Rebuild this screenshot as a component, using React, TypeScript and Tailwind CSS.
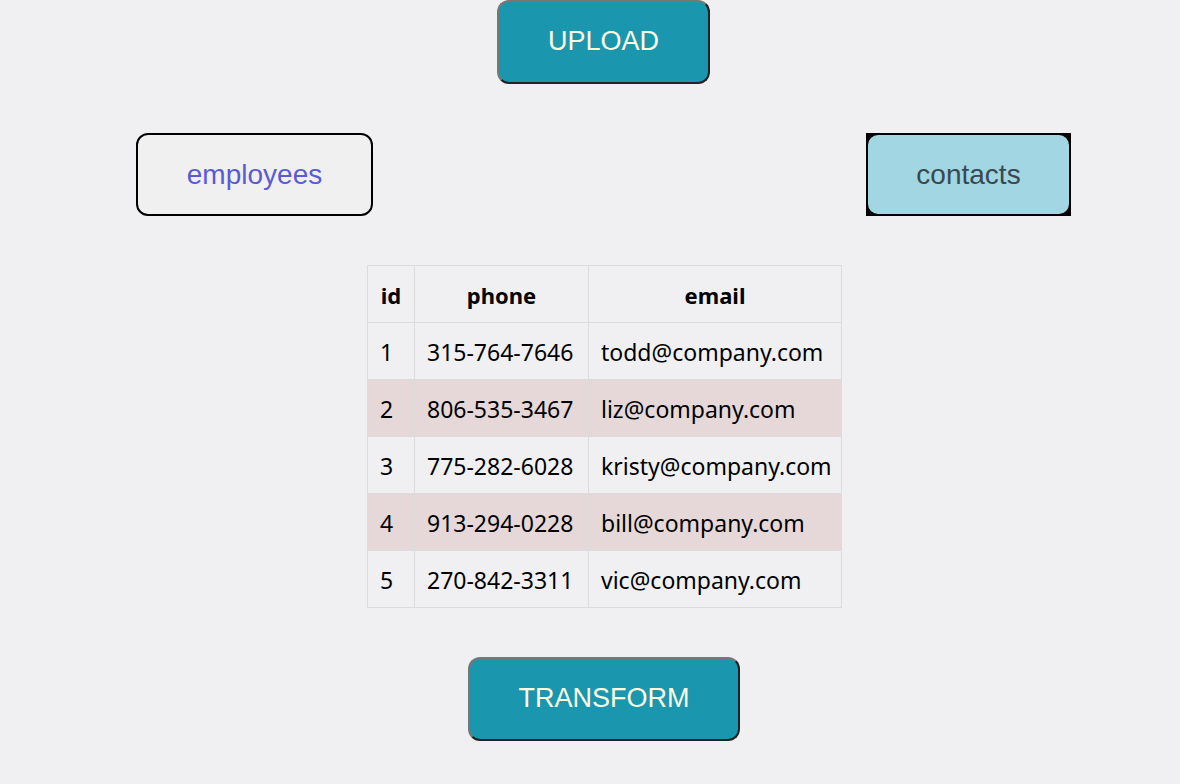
import React from "react";

const rows = [
  { id: 1, phone: "315-764-7646", email: "todd@company.com" },
  { id: 2, phone: "806-535-3467", email: "liz@company.com" },
  { id: 3, phone: "775-282-6028", email: "kristy@company.com" },
  { id: 4, phone: "913-294-0228", email: "bill@company.com" },
  { id: 5, phone: "270-842-3311", email: "vic@company.com" },
];

const btn =
  "rounded-xl border-2 border-t-[#777] border-l-[#777] border-b-[#222] border-r-[#222] bg-[#1a96ae] text-[#fdfde2] text-[27px] h-[84px] flex items-center justify-center pb-[2px]";

export default function App() {
  return (
    <div
      className="w-[1180px] h-[784px] bg-[#f0f0f3] flex flex-col items-center"
      style={{ fontFamily: '"Liberation Sans", Arial, sans-serif' }}
    >
      <button className={`${btn} w-[213px] ml-[27px]`}>UPLOAD</button>
      <div className="w-full flex justify-between pl-[136px] pr-[109px] mt-[49px]">
        <button className="w-[237px] h-[83px] rounded-xl border-2 border-black bg-[#f0f0f0] text-[#5b5bd6] text-[28px] flex items-center justify-center">
          employees
        </button>
        <div className="bg-black">
          <button className="w-[205px] h-[83px] rounded-xl border-2 border-black bg-[#a2d6e2] text-[#38494f] text-[28px] flex items-center justify-center">
            contacts
          </button>
        </div>
      </div>
      <table
        className="mt-[49px] ml-[29px] border-collapse table-fixed text-[23px] text-black w-[474px] whitespace-nowrap"
        style={{ fontFamily: '"Noto Sans", "Open Sans", sans-serif' }}
      >
        <colgroup>
          <col className="w-[47px]" />
          <col className="w-[174px]" />
          <col className="w-[253px]" />
        </colgroup>
        <thead>
          <tr className="h-[57px]">
            <th className="border border-[#dcdcdc] px-3 pt-[2px] font-bold text-[22px]">id</th>
            <th className="border border-[#dcdcdc] px-3 pt-[2px] font-bold text-[22px]">phone</th>
            <th className="border border-[#dcdcdc] px-3 pt-[2px] font-bold text-[22px]">email</th>
          </tr>
        </thead>
        <tbody>
          {rows.map((r, i) => (
            <tr key={r.id} className={`h-[57px] ${i % 2 === 1 ? "bg-[#e6d8d8]" : ""}`}>
              <td className="border border-[#dcdcdc] px-3 pt-[3px] leading-none">{r.id}</td>
              <td className="border border-[#dcdcdc] px-3 pt-[3px] leading-none">{r.phone}</td>
              <td className="border border-[#dcdcdc] px-3 pt-[3px] leading-none">{r.email}</td>
            </tr>
          ))}
        </tbody>
      </table>
      <button className={`${btn} w-[272px] mt-[49px] ml-[28px]`}>TRANSFORM</button>
    </div>
  );
}
